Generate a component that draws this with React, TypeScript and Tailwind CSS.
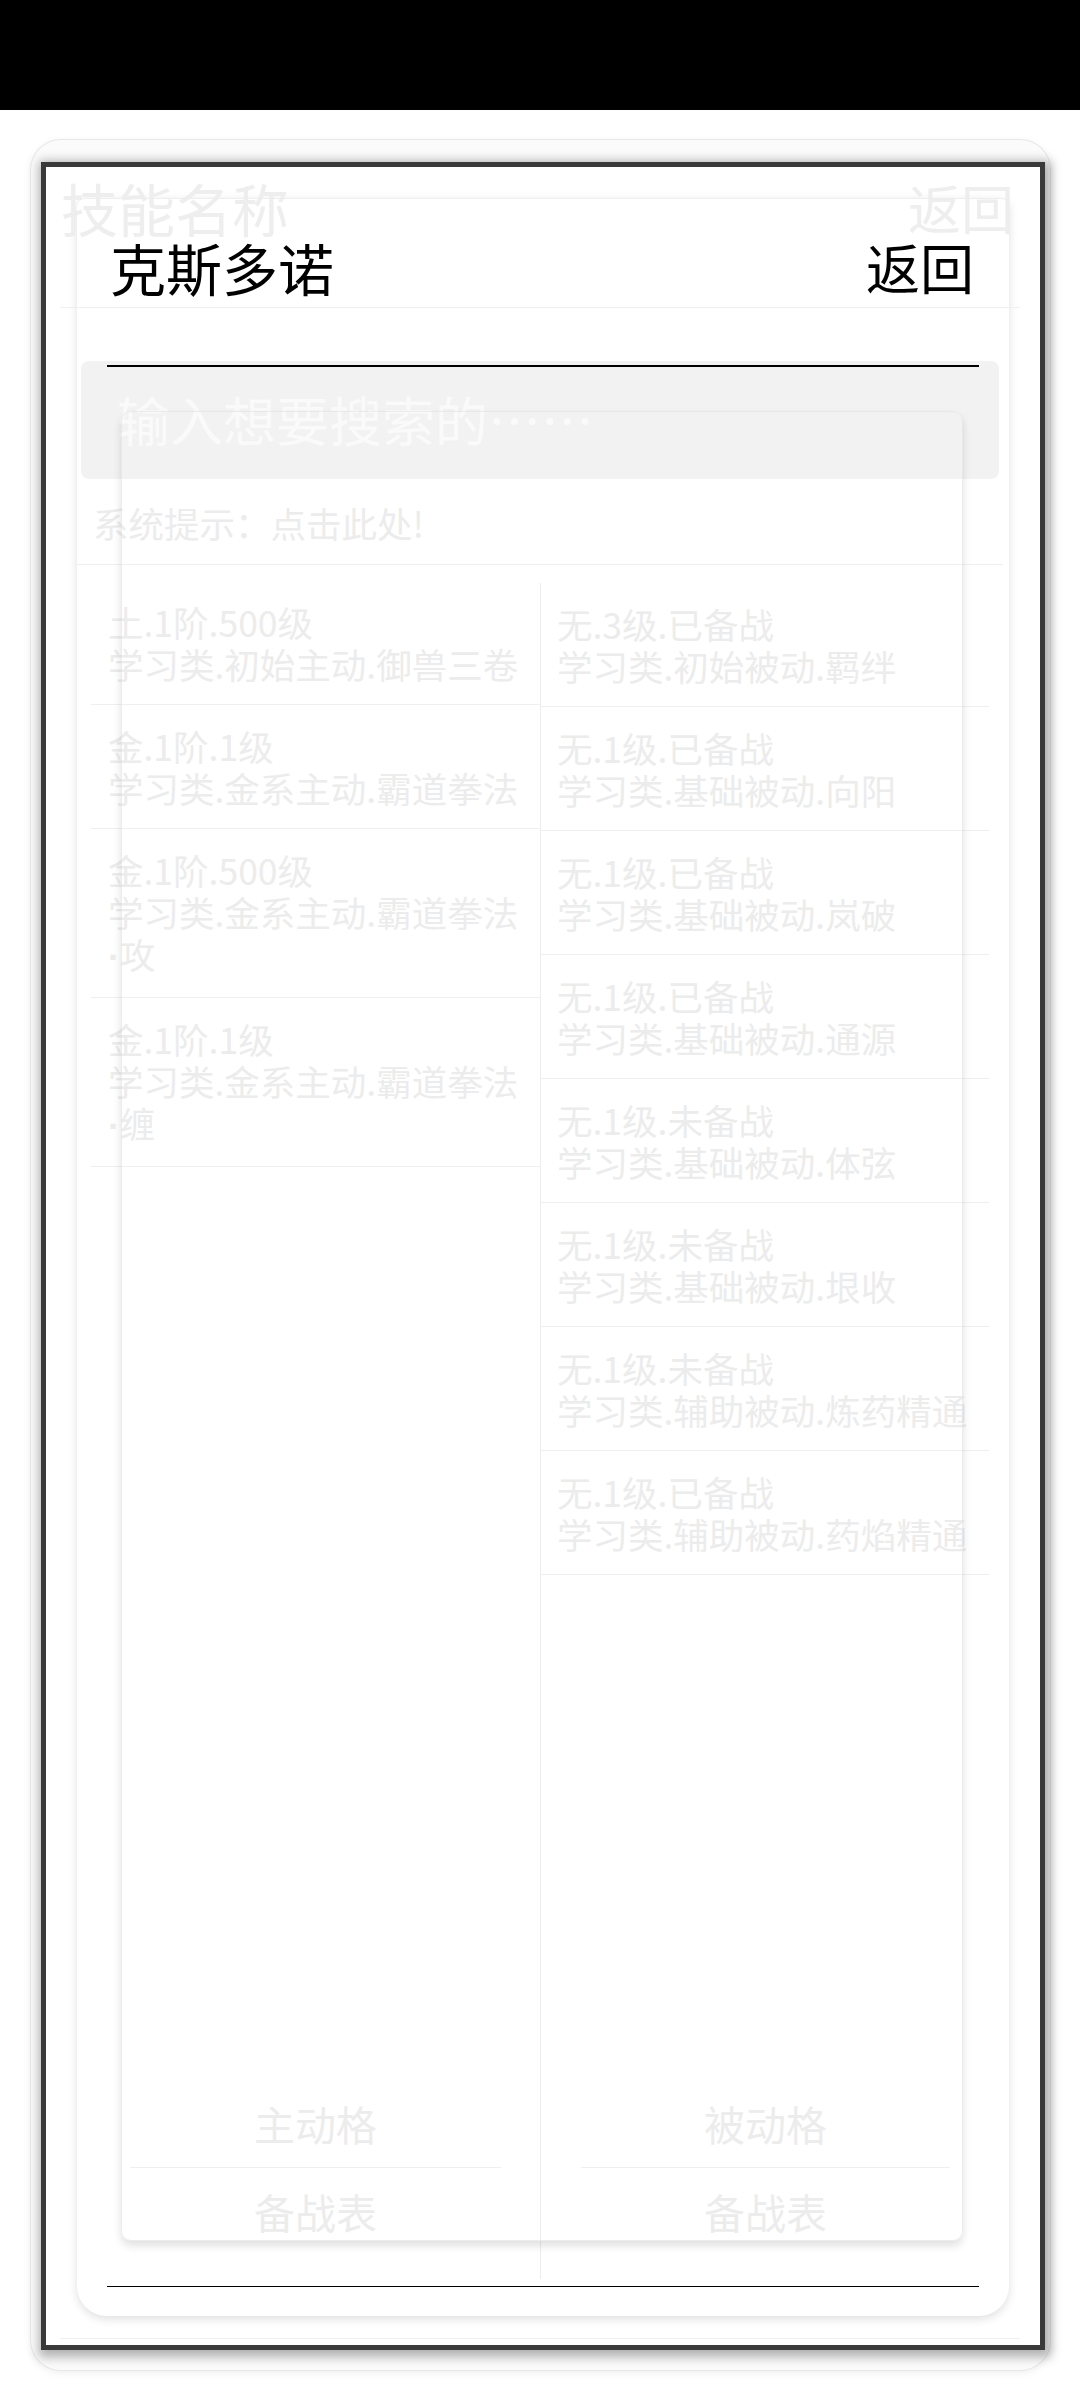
import React from 'react'

const leftSkills = [
  ['土.1阶.500级', '学习类.初始主动.御兽三卷'],
  ['金.1阶.1级', '学习类.金系主动.霸道拳法'],
  ['金.1阶.500级', '学习类.金系主动.霸道拳法', '·攻'],
  ['金.1阶.1级', '学习类.金系主动.霸道拳法', '·缠'],
]

const rightSkills = [
  ['无.3级.已备战', '学习类.初始被动.羁绊'],
  ['无.1级.已备战', '学习类.基础被动.向阳'],
  ['无.1级.已备战', '学习类.基础被动.岚破'],
  ['无.1级.已备战', '学习类.基础被动.通源'],
  ['无.1级.未备战', '学习类.基础被动.体弦'],
  ['无.1级.未备战', '学习类.基础被动.垠收'],
  ['无.1级.未备战', '学习类.辅助被动.炼药精通'],
  ['无.1级.已备战', '学习类.辅助被动.药焰精通'],
]

function SkillRow({ lines, pad }: { lines: string[]; pad: string }) {
  return (
    <div className={`border-b border-[#efefef] pt-[20px] pb-[19px] text-[35.5px] leading-[42px] text-[#ececec] whitespace-nowrap overflow-hidden ${pad}`}>
      {lines.map((l, i) =>
        l.startsWith('·') ? (
          <div key={i}>
            <span className="font-['Liberation_Sans',sans-serif] font-bold">·</span>
            {l.slice(1)}
          </div>
        ) : (
          <div key={i}>{l}</div>
        )
      )}
    </div>
  )
}

function SlotButtons({ label, className }: { label: string; className: string }) {
  return (
    <div className={className}>
      <div className="h-[87px] flex items-center justify-center border-b border-[#efefef] text-[41px] text-[#ececec]">
        {label}
      </div>
      <div className="h-[88px] flex items-center justify-center text-[41px] text-[#ececec]">备战表</div>
    </div>
  )
}

export default function App() {
  return (
    <div className="w-[1080px] h-[2400px] bg-white font-['Noto_Sans_CJK_SC','Noto_Sans',sans-serif] overflow-hidden">
      <div className="h-[110px] bg-black" />

      {/* outer frame */}
      <div className="ml-[31px] mt-[30px] w-[1019px] h-[2230px] rounded-[30px] bg-[#fbfbfb] shadow-[0_0_0_1px_#e8e8e8,0_2px_8px_rgba(0,0,0,0.08)] pt-[22px] pl-[10px]">
        <div className="relative w-[1004px] h-[2188px] bg-white border-[5px] border-[#3a3a3a] shadow-[2px_3px_10px_4px_rgba(0,0,0,0.3)] pl-[31px] pt-[31px]">
          {/* main card */}
          <div className="relative w-[932px] h-[2118px] bg-white rounded-t-[8px] rounded-b-[30px] border-t border-[#eeeeee] shadow-[0_3px_10px_rgba(0,0,0,0.13)] flex flex-col">
            <div className="h-[136px] flex items-center justify-between pl-[33px] pr-[35px] leading-none text-black">
              <span className="text-[56px]">克斯多诺</span>
              <span className="text-[54px]">返回</span>
            </div>
            <div className="relative z-10 mt-[30px] mx-[30px] h-[1.5px] bg-black" />
            <div className="-mt-[6px] ml-[4px] mr-[10px] h-[118px] rounded-[8px] bg-[#f2f2f2] flex items-center pl-[36px] text-[53px] text-[#fafafa]">
              输入想要搜索的……
            </div>
            <div className="h-[86px] mr-[6px] flex items-center pt-[4px] pl-[16px] border-b border-[#efefef] text-[35.5px] text-[#ececec]">
              系统提示：点击此处!
            </div>

            <div className="mt-[16px] flex h-[1698px]">
              <div className="w-[463px] flex flex-col">
                <div className="ml-[14px]">
                  {leftSkills.map((s, i) => (
                    <SkillRow key={i} lines={s} pad="pl-[17px]" />
                  ))}
                </div>
                <SlotButtons label="主动格" className="mt-auto mb-[23px] ml-[53px] mr-[39px]" />
              </div>
              <div className="flex-1 flex flex-col border-l border-[#ececec] mt-[2px]">
                <div className="mr-[20px]">
                  {rightSkills.map((s, i) => (
                    <SkillRow key={i} lines={s} pad="pl-[16px]" />
                  ))}
                </div>
                <SlotButtons label="被动格" className="mt-auto mb-[23px] ml-[40px] mr-[59px]" />
              </div>
            </div>

            <div className="mt-[7px] mx-[30px] h-[1.5px] bg-black" />

            {/* faded overlay panel */}
            <div className="absolute left-[44px] top-[212px] w-[842px] h-[1830px] rounded-[10px] border border-[#e4e4e4]/70 shadow-[0_5px_8px_rgba(0,0,0,0.12)] pointer-events-none" />
          </div>

          {/* faded dialog behind */}
          <div className="absolute left-[15px] top-[12px] text-[57px] leading-[57px] text-[#ececec]/90 pointer-events-none">技能名称</div>
          <div className="absolute right-[26px] top-[14px] text-[53px] leading-[53px] text-[#ececec]/90 pointer-events-none">返回</div>
          <div className="absolute left-[14px] top-[140px] w-[960px] h-px bg-[#efefef]" />
          <div className="absolute left-[14px] top-[2171px] w-[960px] h-px bg-[#efefef]" />
        </div>
      </div>
    </div>
  )
}
